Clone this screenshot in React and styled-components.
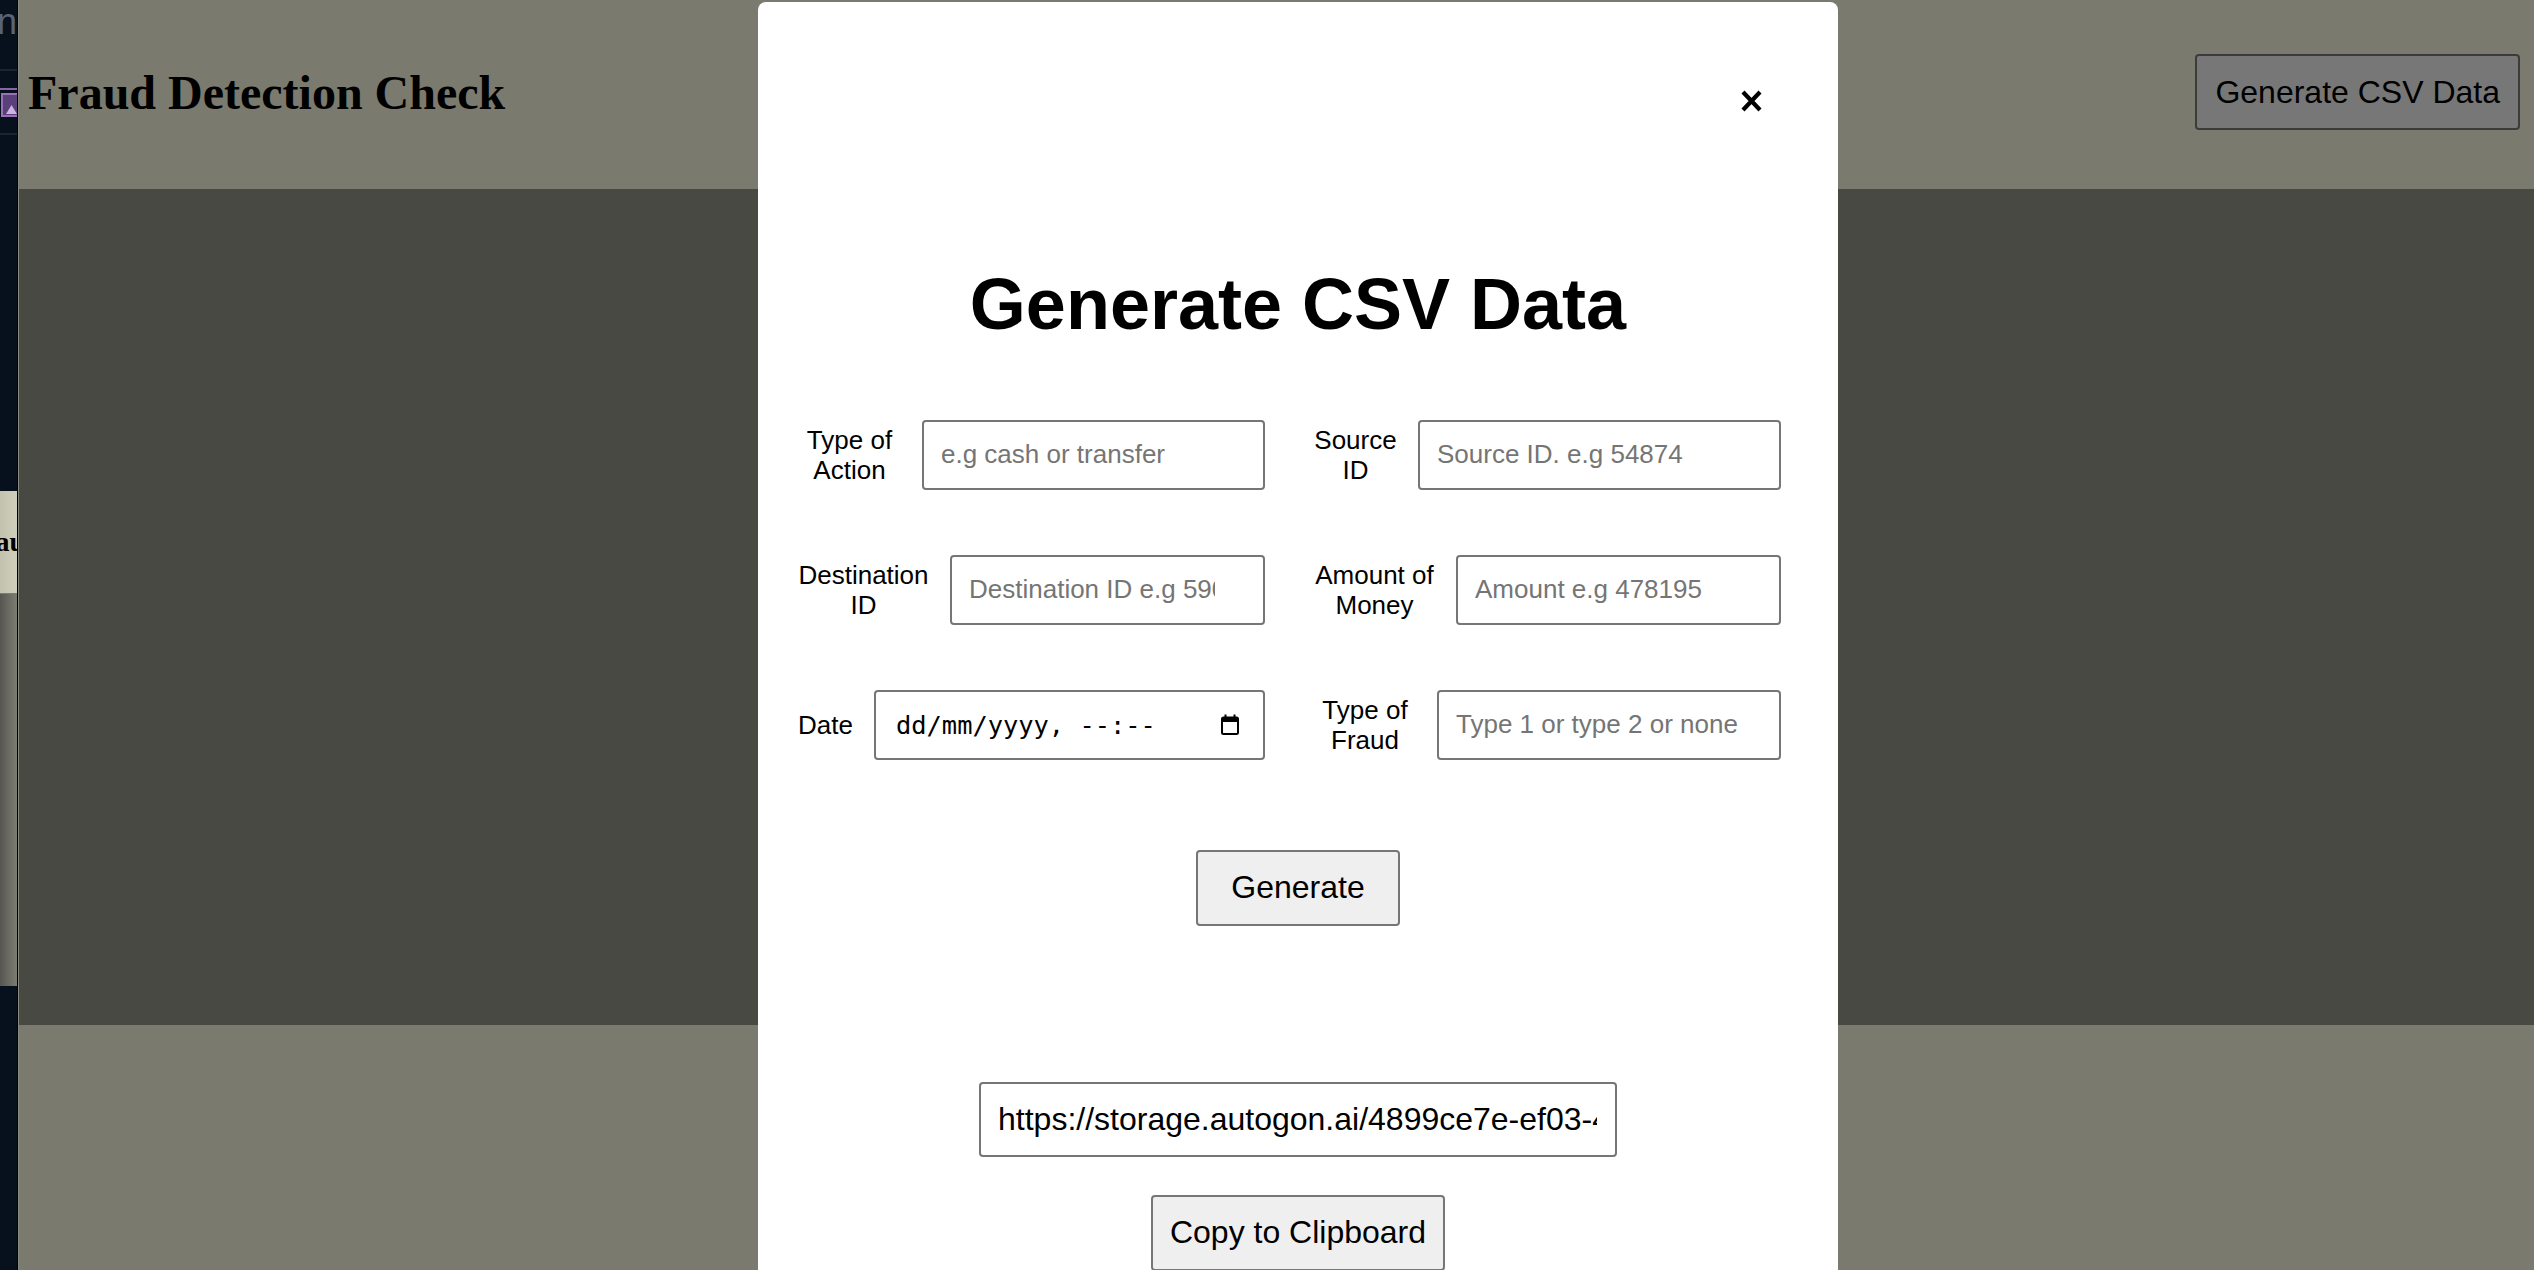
import React from 'react';
import styled, { createGlobalStyle } from 'styled-components';

const GlobalStyle = createGlobalStyle`
  html, body {
    margin: 0;
    padding: 0;
    height: 100%;
    overflow: hidden;
  }
  body {
    font-family: "Liberation Sans", Arial, sans-serif;
  }
  #root { height: 100%; }
  * { box-sizing: border-box; }
`;

/* ---------- Shell ---------- */
const Shell = styled.div`
  display: flex;
  width: 2534px;
  height: 1270px;
  overflow: hidden;
`;

/* ---------- Neighbouring window strip on the left ---------- */
const SideStrip = styled.aside`
  flex: none;
  width: 18px;
  background: #07101d;
  border-right: 1px solid #000;
  display: flex;
  flex-direction: column;
  overflow: hidden;
`;

const StripTitle = styled.div`
  height: 69px;
  padding-top: 4px;
  display: flex;
  justify-content: flex-end;
  font-family: "Liberation Sans", Arial, sans-serif;
  font-size: 36px;
  line-height: 36px;
  color: #56647a;
  white-space: nowrap;
`;

const StripRule = styled.div`
  flex: none;
  height: 2px;
  background: #1b2433;
  margin-top: ${(p) => p.$mt || 0}px;
`;

const StripIcon = styled.div`
  flex: none;
  height: 29px;
  margin-top: 17px;
  display: flex;
`;

const StripPanel = styled.div`
  flex: none;
  height: 103px;
  margin-top: 356px;
  background: linear-gradient(90deg, #c2c2ae, #cfcfbd);
  border-bottom: 1px solid #7c7c72;
  display: flex;
  align-items: center;
  font-family: "Liberation Serif", "Times New Roman", serif;
  font-weight: bold;
  font-size: 28px;
  color: #000;
  white-space: nowrap;
  text-indent: -34px;
`;

const StripGradient = styled.div`
  flex: none;
  height: 392px;
  background: linear-gradient(90deg, #55564f, #7d7d73);
`;

/* ---------- Underlying page ---------- */
const Page = styled.div`
  flex: 1;
  display: flex;
  flex-direction: column;
  background: #f4f4dc;
  border-left: 1px solid #8a8a80;
`;

const Header = styled.header`
  flex: none;
  height: 189px;
  padding: 0 14px 5px 9px;
  display: flex;
  align-items: center;
  justify-content: space-between;
  background: #f4f4dc;
`;

const PageTitle = styled.h1`
  margin: 0;
  font-family: "Liberation Serif", "Times New Roman", serif;
  font-weight: bold;
  font-size: 48px;
  color: #000;
`;

const Band = styled.main`
  flex: none;
  height: 836px;
  background: #909286;
`;

const Button = styled.button`
  font-family: "Liberation Sans", Arial, sans-serif;
  font-size: 32px;
  line-height: 37px;
  color: #000;
  background: #efefef;
  border: 2px solid #767676;
  border-radius: 4px;
  padding: 17.5px ${(p) => p.$px}px;
  cursor: pointer;
  flex: none;
  margin-top: ${(p) => p.$mt || 0}px;
`;

/* ---------- Modal ---------- */
const Overlay = styled.div`
  position: fixed;
  top: 0;
  left: 19px;
  right: 0;
  bottom: 0;
  background: rgba(0, 0, 0, 0.5);
  overflow: hidden;
`;

const Modal = styled.div`
  width: 1080px;
  min-height: 1400px;
  margin: 2px 0 0 739px;
  background: #fff;
  border-radius: 8px;
  display: flex;
  flex-direction: column;
  align-items: center;
`;

const CloseRow = styled.div`
  align-self: stretch;
  display: flex;
  justify-content: flex-end;
  padding: 88px 76px 0 0;
`;

const CloseButton = styled.button`
  width: 21px;
  height: 22px;
  padding: 0;
  border: none;
  background: none;
  display: flex;
  cursor: pointer;
`;

const ModalTitle = styled.h2`
  margin: 151px 0 0;
  font-size: 72px;
  line-height: 1.15;
  font-weight: bold;
  color: #000;
  text-align: center;
`;

const FormGrid = styled.div`
  align-self: flex-start;
  margin: 74px 0 0 40px;
  display: grid;
  grid-template-columns: 467px 467px;
  column-gap: 49px;
  row-gap: 65px;
`;

const Field = styled.div`
  display: flex;
  align-items: center;
  gap: 21px;
`;

const Label = styled.label`
  flex: none;
  width: ${(p) => p.$w}px;
  text-align: center;
  font-size: 26px;
  line-height: 30px;
  color: #000;
`;

const TextInput = styled.input`
  flex: 1;
  min-width: 0;
  height: 70px;
  padding: 0 ${(p) => p.$pr || 17}px 0 17px;
  border: 2px solid #767676;
  border-radius: 4px;
  font-family: "Liberation Sans", Arial, sans-serif;
  font-size: 26px;
  color: #000;
  background: #fff;
  outline: none;
  &::placeholder { color: #757575; }
`;

const DateBox = styled.div`
  flex: 1;
  min-width: 0;
  height: 70px;
  padding: 0 24px 0 20px;
  border: 2px solid #767676;
  border-radius: 4px;
  display: flex;
  align-items: center;
  justify-content: space-between;
  font-family: "DejaVu Sans Mono", "Liberation Mono", monospace;
  font-size: 25.4px;
  color: #000;
  white-space: nowrap;
`;

const UrlInput = styled.input`
  width: 638px;
  height: 75px;
  margin-top: 156px;
  padding: 0 18px 0 17px;
  border: 2px solid #767676;
  border-radius: 4px;
  font-family: "Liberation Sans", Arial, sans-serif;
  font-size: 32px;
  color: #000;
  background: #fff;
  outline: none;
`;

/* ---------- Icons ---------- */
const CloseIcon = () => (
  <svg width="21" height="22" viewBox="0 0 21 22">
    <path d="M2 2 L19 20 M19 2 L2 20" stroke="#000" strokeWidth="4.2" fill="none" />
  </svg>
);

const CalendarIcon = () => (
  <svg width="18" height="21" viewBox="0 0 18 21">
    <rect x="1" y="3.5" width="16" height="16.5" rx="1.5" fill="none" stroke="#000" strokeWidth="2" />
    <rect x="1" y="3.5" width="16" height="4.5" fill="#000" />
    <rect x="3.5" y="0.5" width="2" height="4" fill="#000" />
    <rect x="12.5" y="0.5" width="2" height="4" fill="#000" />
  </svg>
);

const PicIcon = () => (
  <svg width="17" height="29" viewBox="0 0 17 29">
    <rect x="0" y="0" width="17" height="2" fill="#8a62a8" />
    <rect x="2" y="6" width="16" height="22" fill="#5a3f78" stroke="#9a70bb" strokeWidth="2" />
    <polygon points="6,26 11.5,17 17,26" fill="#cbb4df" />
  </svg>
);

const fields = [
  { label: 'Type of Action', w: 103, placeholder: 'e.g cash or transfer' },
  { label: 'Source ID', w: 83, placeholder: 'Source ID. e.g 54874' },
  { label: 'Destination ID', w: 131, placeholder: 'Destination ID e.g 590234', pr: 48 },
  { label: 'Amount of Money', w: 121, placeholder: 'Amount e.g 478195' },
  { label: 'Date', w: 55, date: true },
  { label: 'Type of Fraud', w: 102, placeholder: 'Type 1 or type 2 or none' },
];

export default function App() {
  return (
    <>
      <GlobalStyle />
      <Shell>
        <SideStrip>
          <StripTitle>Fin</StripTitle>
          <StripRule />
          <StripIcon>
            <PicIcon />
          </StripIcon>
          <StripRule $mt={16} />
          <StripPanel>Fraud</StripPanel>
          <StripGradient />
        </SideStrip>

        <Page>
          <Header>
            <PageTitle>Fraud Detection Check</PageTitle>
            <Button $px={18}>Generate CSV Data</Button>
          </Header>
          <Band />
        </Page>

        <Overlay>
          <Modal>
            <CloseRow>
              <CloseButton aria-label="Close">
                <CloseIcon />
              </CloseButton>
            </CloseRow>
            <ModalTitle>Generate CSV Data</ModalTitle>
            <FormGrid>
              {fields.map((f) => (
                <Field key={f.label}>
                  <Label $w={f.w}>{f.label}</Label>
                  {f.date ? (
                    <DateBox>
                      <span>dd/mm/yyyy, --:--</span>
                      <CalendarIcon />
                    </DateBox>
                  ) : (
                    <TextInput type="text" placeholder={f.placeholder} $pr={f.pr} />
                  )}
                </Field>
              ))}
            </FormGrid>
            <Button $px={33} $mt={90}>Generate</Button>
            <UrlInput
              type="text"
              readOnly
              value="https://storage.autogon.ai/4899ce7e-ef03-4a1b-9c2d-7f3e5b6a8d10.csv"
            />
            <Button $px={17} $mt={38}>Copy to Clipboard</Button>
          </Modal>
        </Overlay>
      </Shell>
    </>
  );
}
